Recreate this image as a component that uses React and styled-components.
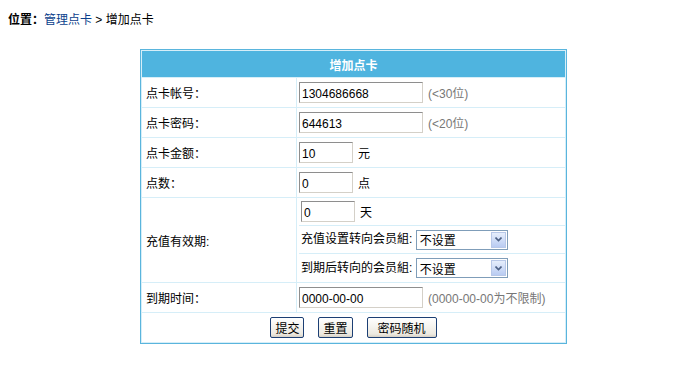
import React from 'react';
import styled, { createGlobalStyle } from 'styled-components';

const Global = createGlobalStyle`
  body {
    margin: 0;
    background: #fff;
    font-family: Tahoma, "Liberation Sans", "Noto Sans CJK SC", sans-serif;
    font-size: 12px;
    color: #000;
  }
`;

const Page = styled.div`
  padding: 12px 8px 0 8px;
`;

const Crumb = styled.div`
  height: 16px;
  line-height: 16px;
  b { font-weight: bold; }
  a { color: #0b3f8c; text-decoration: none; }
`;

const Form = styled.table`
  margin: 21px 0 0 132px;
  width: 427px;
  border: 1px solid #5ab5dd;
  border-spacing: 1px;
  background: #d6eef8;
  td { padding: 0; }
`;

const Head = styled.td`
  background: #4fb4df;
  color: #fff;
  font-weight: bold;
  text-align: center;
  height: 26px;
`;

const Label = styled.td`
  background: #fff;
  width: 150px;
  padding-left: 4px !important;
  height: 29px;
`;

const Value = styled.td`
  background: #fff;
  padding-left: 2px !important;
  height: 29px;
`;

const Inner = styled.table`
  width: 100%;
  border-spacing: 0;
  td {
    height: 27px;
    padding-left: 2px;
    border-bottom: 1px solid #d6eef8;
  }
  tr:last-child td { border-bottom: none; height: 28px; }
`;

const Input = styled.input`
  width: ${p => p.$w}px;
  height: 21px;
  box-sizing: border-box;
  border: 1px solid #8e8e8e;
  border-right-color: #d4d0c8;
  border-bottom-color: #d4d0c8;
  padding: 2px 2px 0;
  font-family: Tahoma, "Liberation Sans", sans-serif;
  font-size: 12px;
  vertical-align: middle;
  outline: none;
`;

const Hint = styled.span`
  color: #777;
  margin-left: 5px;
  vertical-align: middle;
`;

const Unit = styled.span`
  margin-left: 5px;
  vertical-align: middle;
`;

const Select = styled.span`
  display: inline-flex;
  align-items: center;
  justify-content: space-between;
  width: 92px;
  height: 20px;
  box-sizing: border-box;
  border: 1px solid #7f9db9;
  background: #fff;
  padding: 0 1px 0 3px;
  vertical-align: middle;
`;

const Arrow = styled.span`
  width: 15px;
  height: 16px;
  box-sizing: border-box;
  border: 1px solid #b8c8e8;
  background: linear-gradient(#e6eefc, #b9cbf2);
  display: flex;
  align-items: center;
  justify-content: center;
`;

const Buttons = styled.td`
  background: #fff;
  text-align: center;
  height: 29px;
`;

const Btn = styled.button`
  height: 21px;
  padding: 0 ${p => p.$pad || 4}px;
  margin: 0 7px;
  border: 1px solid #1c3f74;
  border-radius: 2px;
  background: linear-gradient(#fff, #ece9e0 85%, #d6d0c5);
  font-family: "Noto Sans CJK SC", sans-serif;
  font-size: 12px;
  line-height: 16px;
  color: #000;
  vertical-align: middle;
`;

const Dropdown = ({ text }) => (
  <Select>
    <span>{text}</span>
    <Arrow>
      <svg width="7" height="5" viewBox="0 0 7 5">
        <path d="M0.5 0.5 L3.5 3.5 L6.5 0.5" stroke="#4d6185" strokeWidth="1.6" fill="none" />
      </svg>
    </Arrow>
  </Select>
);

export default function App() {
  return (
    <Page>
      <Global />
      <Crumb>
        <b>位置：</b><a href="#">管理点卡</a> &gt; 增加点卡
      </Crumb>
      <Form>
        <tbody>
          <tr><Head colSpan={2}>增加点卡</Head></tr>
          <tr>
            <Label>点卡帐号：</Label>
            <Value><Input $w={124} defaultValue="1304686668" /><Hint>(&lt;30位)</Hint></Value>
          </tr>
          <tr>
            <Label>点卡密码：</Label>
            <Value><Input $w={124} defaultValue="644613" /><Hint>(&lt;20位)</Hint></Value>
          </tr>
          <tr>
            <Label>点卡金额：</Label>
            <Value><Input $w={54} defaultValue="10" /><Unit>元</Unit></Value>
          </tr>
          <tr>
            <Label>点数：</Label>
            <Value><Input $w={54} defaultValue="0" /><Unit>点</Unit></Value>
          </tr>
          <tr>
            <Label>充值有效期:</Label>
            <Value style={{ padding: 0 }}>
              <Inner>
                <tbody>
                  <tr><td><Input $w={54} defaultValue="0" /><Unit>天</Unit></td></tr>
                  <tr><td>充值设置转向会员組: <Dropdown text="不设置" /></td></tr>
                  <tr><td>到期后转向的会员組: <Dropdown text="不设置" /></td></tr>
                </tbody>
              </Inner>
            </Value>
          </tr>
          <tr>
            <Label>到期时间：</Label>
            <Value><Input $w={124} defaultValue="0000-00-00" /><Hint>(0000-00-00为不限制)</Hint></Value>
          </tr>
          <tr>
            <Buttons colSpan={2}>
              <Btn>提交</Btn>
              <Btn>重置</Btn>
              <Btn $pad={10}>密码随机</Btn>
            </Buttons>
          </tr>
        </tbody>
      </Form>
    </Page>
  );
}
